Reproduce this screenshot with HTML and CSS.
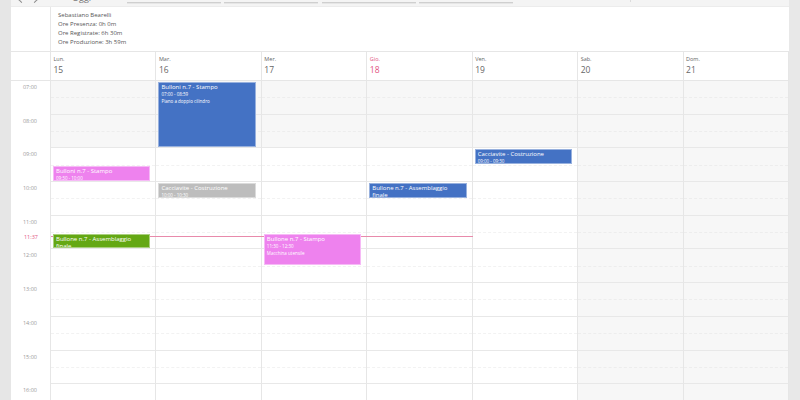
FILE: index.html
```html
<!doctype html>
<html lang="it">

<head>
    <meta charset="utf-8">
    <title>Calendario</title>
    <meta name="viewport" content="width=device-width, initial-scale=1">
    <link rel="stylesheet" href="styles.css">
</head>

<body>
    <div class="side"></div>
    <div class="page">
        <div class="toolbar">
            <div class="toolbar__inner">
                <span class="toolbar__arrow"></span>
                <span class="toolbar__arrow toolbar__arrow--next"></span>
                <span class="toolbar__today">Oggi</span>
                <span class="toolbar__input toolbar__input--first"></span>
                <span class="toolbar__input"></span>
                <span class="toolbar__input"></span>
                <span class="toolbar__input"></span>
                <span class="toolbar__icon"></span>
                <span class="toolbar__sep"></span>
            </div>
        </div>

        <div class="info">
            <div class="info__gutter"></div>
            <div class="info__text">
                <p>Sebastiano Bearelli</p>
                <p>Ore Presenza: 0h 0m</p>
                <p>Ore Registrate: 6h 30m</p>
                <p>Ore Produzione: 3h 59m</p>
            </div>
        </div>

        <div class="days">
            <div class="days__gutter"></div>
            <div class="day"><span class="day__name">Lun.</span><span class="day__num">15</span></div>
            <div class="day"><span class="day__name">Mar.</span><span class="day__num">16</span></div>
            <div class="day"><span class="day__name">Mer.</span><span class="day__num">17</span></div>
            <div class="day day--today"><span class="day__name">Gio.</span><span class="day__num">18</span></div>
            <div class="day"><span class="day__name">Ven.</span><span class="day__num">19</span></div>
            <div class="day"><span class="day__name">Sab.</span><span class="day__num">20</span></div>
            <div class="day"><span class="day__name">Dom.</span><span class="day__num">21</span></div>
        </div>

        <div class="timegrid">
            <div class="rows" id="rows"></div>

            <div class="cols">
                <div class="cols__gutter">
                    <span class="now-label" style="top:155.6px">11:37</span>
                </div>
                <div class="col">
                    <div class="event event--pink" style="top:85.25px;height:14.85px">
                        <div class="event__title">Bulloni n.7 - Stampo</div>
                        <div class="event__time">09:30 - 10:00</div>
                    </div>
                    <div class="event event--green" style="top:152.65px;height:14.85px">
                        <div class="event__title">Bullone n.7 - Assemblaggio finale</div>
                    </div>
                </div>
                <div class="col">
                    <div class="event event--blue" style="top:1px;height:65.4px">
                        <div class="event__title">Bulloni n.7 - Stampo</div>
                        <div class="event__time">07:00 - 08:59</div>
                        <div class="event__desc">Piano a doppio cilindro</div>
                    </div>
                    <div class="event event--grey" style="top:102.1px;height:14.85px">
                        <div class="event__title">Cacciavite - Costruzione</div>
                        <div class="event__time">10:00 - 10:30</div>
                    </div>
                </div>
                <div class="col">
                    <div class="event event--pink" style="top:152.65px;height:31.7px">
                        <div class="event__title">Bullone n.7 - Stampo</div>
                        <div class="event__time">11:30 - 12:30</div>
                        <div class="event__desc">Macchina utensile</div>
                    </div>
                </div>
                <div class="col">
                    <div class="event event--blue" style="top:102.1px;height:14.85px">
                        <div class="event__title">Bullone n.7 - Assemblaggio finale</div>
                    </div>
                </div>
                <div class="col">
                    <div class="event event--blue" style="top:68.4px;height:14.85px">
                        <div class="event__title">Cacciavite - Costruzione</div>
                        <div class="event__time">09:00 - 09:30</div>
                    </div>
                </div>
                <div class="col"></div>
                <div class="col"></div>

                <div class="now-line" style="top:155px"></div>
            </div>
        </div>
    </div>
    <div class="scrollbar"></div>

    <script>
        // righe orarie 07:00 - 16:00
        var rows = document.getElementById('rows');

        for (var h = 7; h <= 16; h++) {
            var row = document.createElement('div');
            row.className = 'hour';

            var label = document.createElement('div');
            label.className = 'hour__label';
            label.textContent = (h < 10 ? '0' : '') + h + ':00';
            row.appendChild(label);

            for (var d = 0; d < 7; d++) {
                var cell = document.createElement('div');
                cell.className = 'hour__cell';
                // fuori orario: prima delle 9 e weekend
                if (h < 9 || d > 4) {
                    cell.className += ' hour__cell--off';
                }
                row.appendChild(cell);
            }
            rows.appendChild(row);
        }
    </script>
</body>

</html>
```

FILE: styles.css
```css
* {
    padding: 0;
    margin: 0;
    box-sizing: border-box;
}

html,
body {
    height: 100%;
}

body {
    display: flex;
    overflow: hidden;
    font-family: "Open Sans", "Liberation Sans", sans-serif;
    color: #555;
    background-color: #fff;
}

.side {
    width: 11px;
    flex: none;
    background-color: #e6e6e6;
}

.scrollbar {
    width: 11px;
    flex: none;
    background-color: #e8e8e8;
}

.page {
    flex: 1;
    min-width: 0;
    display: flex;
    flex-direction: column;
}

/* barra strumenti (tagliata in alto) */
.toolbar {
    height: 7px;
    flex: none;
    overflow: hidden;
    background-color: #f4f4f4;
    border-bottom: 1px solid #ececec;
}

.toolbar__inner {
    display: flex;
    align-items: flex-end;
    height: 16px;
    margin-top: -11px;
    padding-left: 2px;
    font-size: 9px;
    line-height: 14px;
    color: #777;
}

.toolbar__arrow {
    position: relative;
    width: 15px;
    height: 16px;
    flex: none;
}

/* piccole frecce, se ne vede solo la punta inferiore */
.toolbar__arrow:after {
    content: "";
    position: absolute;
    left: 6px;
    top: 8px;
    width: 4px;
    height: 4px;
    border-left: 1px solid #888;
    border-bottom: 1px solid #888;
    transform: rotate(45deg);
}

.toolbar__arrow--next:after {
    left: 4px;
    transform: rotate(-135deg);
}

.toolbar__today {
    flex: none;
    margin-left: 29px;
}

.toolbar__input {
    width: 94px;
    height: 16px;
    flex: none;
    margin-bottom: 2px;
    margin-left: 3.3px;
    border-bottom: 1px solid #cfcfcf;
    box-shadow: 0 1px 0 #e6e6e6;
}

.toolbar__input--first {
    margin-left: 36px;
}

.toolbar__icon {
    width: 4px;
    height: 2px;
    flex: none;
    margin: 0 0 5px 8px;
    background-color: #aaa;
}

.toolbar__sep {
    width: 1px;
    height: 16px;
    flex: none;
    margin: 0 0 3px 105px;
    background-color: #dcdcdc;
}

/* pannello riepilogo */
.info {
    display: flex;
    height: 45px;
    flex: none;
    border-bottom: 1px solid #e6e6e6;
}

.info__gutter {
    width: 40px;
    border-right: 1px solid #e6e6e6;
}

.info__text {
    padding: 4px 7px;
    font-size: 6px;
    line-height: 9px;
    color: #555;
}

/* intestazione giorni */
.days,
.hour,
.cols {
    display: grid;
    grid-template-columns: 40px repeat(7, 1fr);
}

.days {
    height: 29px;
    flex: none;
    border-bottom: 1px solid #e6e6e6;
}

.days__gutter,
.day {
    border-right: 1px solid #e6e6e6;
}

.day {
    display: flex;
    flex-direction: column;
    padding: 3px 2.5px 0;
    color: #666;
}

.day__name {
    font-size: 5.5px;
    line-height: 8px;
}

.day__num {
    margin-top: 2px;
    font-size: 8.5px;
    line-height: 10px;
}

.day--today {
    color: #e2557f;
}

/* griglia oraria */
.timegrid {
    position: relative;
    flex: 1;
    overflow: hidden;
}

.hour {
    height: 33.7px;
}

.hour__label {
    padding: 2px 13px 0 0;
    text-align: right;
    font-size: 5.5px;
    line-height: 8px;
    color: #999;
    border-right: 1px solid #e6e6e6;
}

.hour__cell {
    position: relative;
    border-right: 1px solid #e6e6e6;
    border-bottom: 1px solid #e8e8e8;
}

.hour__cell:after {
    content: "";
    position: absolute;
    left: 0;
    right: 0;
    top: 50%;
    border-top: 1px dashed #f2f2f2;
}

.hour__cell--off {
    background-color: #f7f7f7;
}

.hour__cell--off:after {
    border-top-color: #ededed;
}

.cols {
    position: absolute;
    top: 0;
    left: 0;
    right: 0;
    bottom: 0;
}

.cols__gutter,
.col {
    position: relative;
}

.now-label {
    position: absolute;
    right: 13px;
    margin-top: -4px;
    font-size: 5.5px;
    line-height: 8px;
    color: #e2557f;
}

.now-line {
    position: absolute;
    left: 40px;
    width: calc((100% - 40px) * 4 / 7);
    border-top: 1px solid #e88aab;
}

/* eventi */
.event {
    position: absolute;
    left: 2px;
    right: 6px;
    overflow: hidden;
    padding: 1px 2px;
    color: #fff;
    border: 1px solid rgba(255, 255, 255, 0.45);
    z-index: 1;
}

.event__title {
    font-size: 6px;
    line-height: 7px;
}

.event__time {
    font-size: 4.5px;
    line-height: 6px;
}

.event__desc {
    margin-top: 1px;
    font-size: 4.5px;
    line-height: 6px;
}

.event--blue {
    background-color: #4472c4;
}

.event--pink {
    background-color: #ee82ee;
}

.event--grey {
    background-color: #bdbdbd;
}

.event--green {
    background-color: #64a814;
}
```
